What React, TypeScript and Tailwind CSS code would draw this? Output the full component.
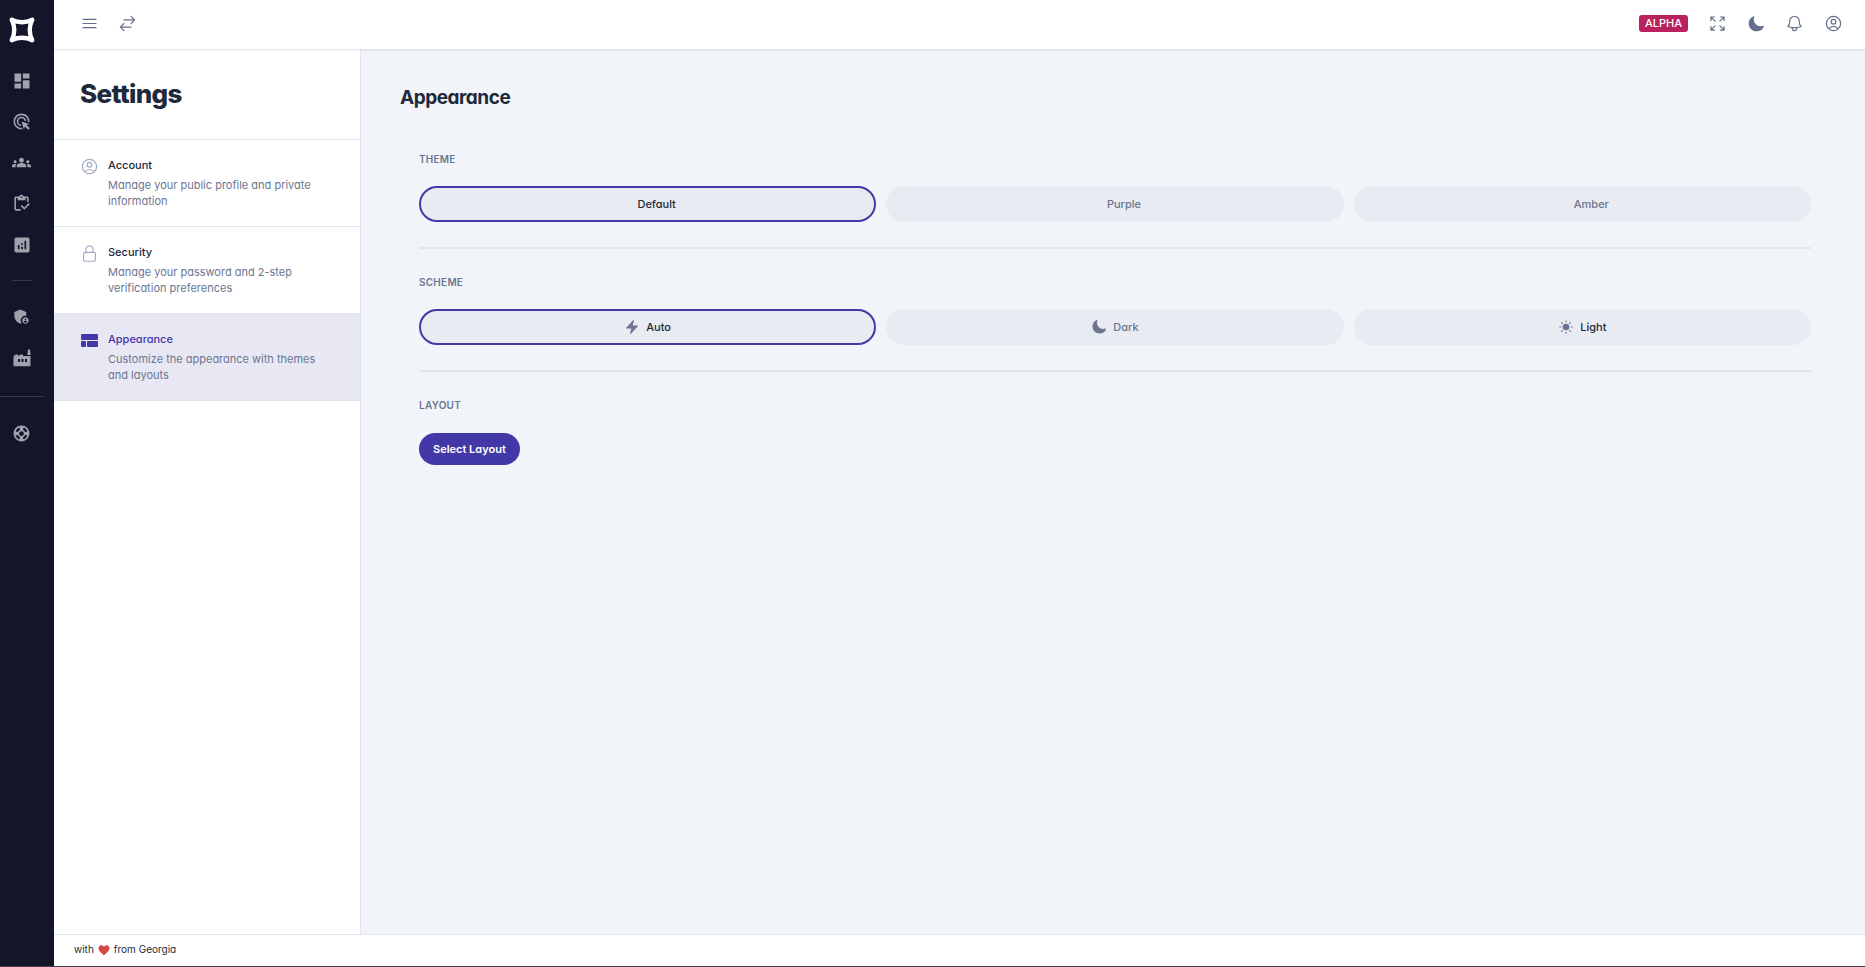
import type { ReactNode } from 'react';
import {
  HiOutlineBars3,
  HiOutlineArrowsRightLeft,
  HiOutlineArrowsPointingOut,
  HiOutlineBell,
  HiOutlineUserCircle,
  HiOutlineLockClosed,
  HiMoon,
  HiBolt,
} from 'react-icons/hi2';
import { MdDashboard, MdAdsClick, MdGroups, MdOutlineInventory, MdAnalytics, MdAdminPanelSettings, MdSupport } from 'react-icons/md';

const Logo = () => (
  <svg viewBox="0 0 28 28" className="h-7 w-7" fill="none" stroke="#fff" strokeLinejoin="round">
    <path d="M4 4Q14 8.500 24 4Q19.500 14 24 24Q14 19.500 4 24Q8.500 14 4 4Z" strokeWidth="4.400" />
    <path d="M4 4h.01M24 4h.01M4 24h.01M24 24h.01" strokeWidth="4.800" strokeLinecap="round" />
  </svg>
);

const FactoryIcon = () => (
  <svg viewBox="0 0 20 20" className="h-5 w-5" fill="currentColor" fillRule="evenodd">
    <path d="M16 1.500h2l.7 5.500h-3.400ZM2 8l1.500-1.500h2.500V8l2.500-1.500h2.500V8h7.500v9.500a.8.8 0 0 1-.8.800H2.300a.8.800 0 0 1-.8-.8V9ZM6 11v3h2v-3ZM9.500 11v3h2v-3ZM13 11v3h2v-3Z" />
  </svg>
);

const LayoutIcon = () => (
  <svg viewBox="0 0 19 19" className="h-[19px] w-[19px]" fill="#4338a8">
    <rect x="1" y="3" width="17" height="6" rx="1" />
    <rect x="1" y="10" width="5" height="6" rx="1" />
    <rect x="7" y="10" width="11" height="6" rx="1" />
  </svg>
);

const SunIcon = () => (
  <svg viewBox="0 0 16 16" className="h-4 w-4" stroke="#6b7591" strokeLinecap="round">
    <circle cx="8" cy="8" r="3.300" fill="#6b7591" stroke="none" />
    <path d="M8 1.800v1M8 13.200v1M1.800 8h1M13.200 8h1M3.600 3.600l.8.8M11.600 11.600l.8.8M3.600 12.400l.8-.8M11.600 4.400l.8-.8" strokeWidth="1.100" />
  </svg>
);

const mainNav = [
  { label: 'Dashboard', icon: <MdDashboard size={20} /> },
  { label: 'Targets', icon: <MdAdsClick size={19} /> },
  { label: 'Teams', icon: <MdGroups size={19} /> },
  { label: 'Tasks', icon: <MdOutlineInventory size={19} /> },
  { label: 'Analytics', icon: <MdAnalytics size={20} /> },
];

const adminNav = [
  { label: 'Administration', icon: <MdAdminPanelSettings size={19} /> },
  { label: 'Factory', icon: <FactoryIcon /> },
];

const NavLink = ({ label, children }: { label: string; children: ReactNode }) => (
  <a href="#" aria-label={label} className="flex h-[41px] w-[43px] items-center justify-center text-[#a1a2ad]">
    {children}
  </a>
);

const Sidebar = () => (
  <nav className="flex w-[54px] shrink-0 flex-col bg-[#13162a]">
    <a href="#" aria-label="Home" className="flex h-[60px] w-[43px] items-center justify-center">
      <Logo />
    </a>
    {mainNav.map(({ label, icon }) => (
      <NavLink key={label} label={label}>
        {icon}
      </NavLink>
    ))}
    <hr className="mx-3 my-[15px] w-5 border-[#35374a]" />
    {adminNav.map(({ label, icon }) => (
      <NavLink key={label} label={label}>
        {icon}
      </NavLink>
    ))}
    <hr className="mt-[18px] mb-4 w-11 border-[#35374a]" />
    <NavLink label="Support">
      <MdSupport size={19} />
    </NavLink>
  </nav>
);

const Header = () => (
  <header className="z-10 flex h-[49px] shrink-0 items-center justify-between bg-white pr-[22px] pb-[2px] pl-[26px] text-[#64708b] shadow">
    <div className="flex items-center gap-[19px]">
      <button type="button" aria-label="Toggle navigation">
        <HiOutlineBars3 size={19} />
      </button>
      <button type="button" aria-label="Switch">
        <HiOutlineArrowsRightLeft size={19} />
      </button>
    </div>
    <div className="flex items-center gap-5">
      <span className="rounded-[3px] bg-[#b9215f] px-[6px] text-[11px] leading-[17px] font-medium text-white">ALPHA</span>
      <button type="button" aria-label="Fullscreen">
        <HiOutlineArrowsPointingOut size={19} />
      </button>
      <button type="button" aria-label="Scheme">
        <HiMoon size={18} />
      </button>
      <button type="button" aria-label="Notifications">
        <HiOutlineBell size={19} />
      </button>
      <button type="button" aria-label="User">
        <HiOutlineUserCircle size={19} />
      </button>
    </div>
  </header>
);

const panels = [
  {
    title: 'Account',
    description: 'Manage your public profile and private information',
    icon: <HiOutlineUserCircle size={19} />,
  },
  {
    title: 'Security',
    description: 'Manage your password and 2-step verification preferences',
    icon: <HiOutlineLockClosed size={19} />,
  },
  {
    title: 'Appearance',
    description: 'Customize the appearance with themes and layouts',
    icon: <LayoutIcon />,
    active: true,
  },
];

const SettingsPanel = () => (
  <aside className="w-[307px] shrink-0 border-r border-[#e2e5ef] bg-white">
    <h1 className="px-[26px] py-[29px] text-[26px] leading-8 font-extrabold tracking-tight text-[#1e293b]">Settings</h1>
    {panels.map(({ title, description, icon, active }) => (
      <a
        key={title}
        href="#"
        className={`flex gap-[9px] border-t border-[#e2e5ef] px-[26px] py-[17px] ${active ? 'bg-[#e8e8f4]' : ''}`}
      >
        <span className="shrink-0 text-[#a3a9c2]">{icon}</span>
        <span className="block">
          <span className={`block text-[11px] leading-[17px] font-medium ${active ? 'text-[#4338a8]' : 'text-[#1e293b]'}`}>{title}</span>
          <span className="mt-[3px] block text-[11px] leading-4 text-[#6b7591]">{description}</span>
        </span>
      </a>
    ))}
    <hr className="border-[#e2e5ef]" />
  </aside>
);

const Label = ({ children }: { children: ReactNode }) => (
  <h3 className="text-[10px] leading-4 font-semibold tracking-wide text-[#6b7591]">{children}</h3>
);

type OptionProps = { label: string; icon?: ReactNode; selected?: boolean; strong?: boolean };

const Option = ({ label, icon, selected, strong }: OptionProps) => (
  <button
    type="button"
    className={`flex h-9 items-center justify-center gap-[6px] rounded-full bg-[#e8ebf2] text-[11px] font-medium ${
      selected ? 'border-2 border-[#4338a8]' : ''
    } ${strong ? 'text-[#1e293b]' : 'text-[#6b7591]'}`}
  >
    <span className="min-w-3 text-[#6b7591]">{icon}</span>
    {label}
  </button>
);

const Appearance = () => (
  <main className="flex-1 bg-[#f1f5fa] pt-[37px] pr-[54px] pl-[39px]">
    <h2 className="text-[19px] leading-6 font-bold tracking-tight text-[#1e293b]">Appearance</h2>
    <div className="mt-[41px] ml-[19px]">
      <Label>THEME</Label>
      <div className="mt-[19px] grid grid-cols-3 gap-[10px]">
        <Option label="Default" selected strong />
        <Option label="Purple" />
        <Option label="Amber" />
      </div>
      <hr className="my-[25px] border-t-2 border-[#e2e6ef]" />
      <Label>SCHEME</Label>
      <div className="mt-[19px] grid grid-cols-3 gap-[10px]">
        <Option label="Auto" icon={<HiBolt size={16} />} selected strong />
        <Option label="Dark" icon={<HiMoon size={16} />} />
        <Option label="Light" icon={<SunIcon />} strong />
      </div>
      <hr className="my-[25px] border-t-2 border-[#e2e6ef]" />
      <Label>LAYOUT</Label>
      <button type="button" className="mt-5 h-8 rounded-full bg-[#4338a8] px-[14px] text-[11px] font-semibold text-white">
        Select Layout
      </button>
    </div>
  </main>
);

const Footer = () => (
  <footer className="flex h-8 shrink-0 items-center gap-1 border-t border-[#e2e5ef] bg-white px-5 pb-[2px] text-[10px] text-[#1e293b]">
    with
    <svg viewBox="0 0 12 12" className="h-3 w-3" fill="#d64a42" role="img" aria-label="love">
      <path d="M6 11.200C3.500 9 .5 7 .5 4.200.5 2.300 2 1.200 3.500 1.200c1.100 0 2 .6 2.500 1.500.5-.9 1.400-1.500 2.500-1.500 1.500 0 3 1.100 3 3C11.500 7 8.500 9 6 11.200Z" />
    </svg>
    from Georgia
  </footer>
);

const App = () => {
  return (
    <div className="flex min-h-screen border-b border-[#433c4c] font-[Inter,sans-serif] [font-feature-settings:'cv11']">
      <Sidebar />
      <div className="flex flex-1 flex-col">
        <Header />
        <div className="flex flex-1">
          <SettingsPanel />
          <Appearance />
        </div>
        <Footer />
      </div>
    </div>
  );
};

export default App;
